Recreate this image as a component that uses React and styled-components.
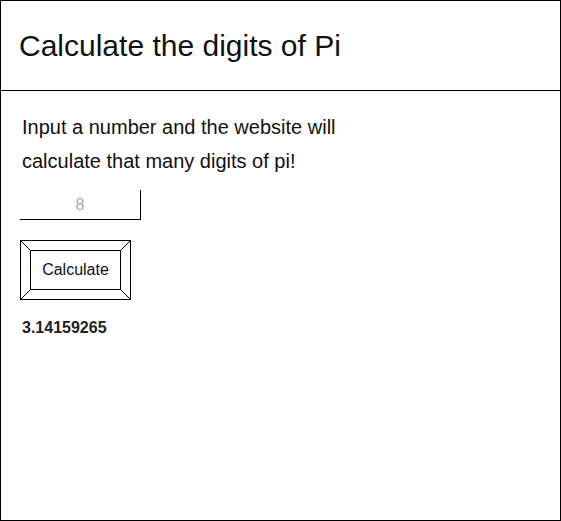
import React, { useState } from 'react'
import styled, { createGlobalStyle } from 'styled-components'

const GlobalStyle = createGlobalStyle`
  html, body {
    margin: 0;
    padding: 0;
    background: #fff;
  }
  body {
    font-family: "Liberation Sans", Arial, sans-serif;
    color: #111;
  }
`

const Page = styled.div`
  width: 561px;
  height: 521px;
  box-sizing: border-box;
  border: 1px solid #000;
  display: flex;
  flex-direction: column;
`

const Header = styled.header`
  height: 90px;
  box-sizing: border-box;
  border-bottom: 1px solid #000;
  display: flex;
  align-items: center;
  padding-left: 18px;
`

const Title = styled.h1`
  margin: 0;
  font-size: 30px;
  font-weight: normal;
  color: #111;
`

const Content = styled.main`
  padding: 19px 19px 0 19px;
  display: flex;
  flex-direction: column;
  align-items: flex-start;
`

const Intro = styled.p`
  margin: 0 0 0 2px;
  font-size: 20px;
  line-height: 34px;
  width: 330px;
`

const NumberInput = styled.input`
  margin-top: 12px;
  width: 121px;
  height: 30px;
  box-sizing: border-box;
  border: none;
  border-right: 1px solid #000;
  border-bottom: 1px solid #000;
  font-family: inherit;
  font-size: 16px;
  text-align: center;
  outline: none;
  padding: 0;

  &::placeholder {
    color: #aaa;
  }
`

const Button = styled.button`
  position: relative;
  margin-top: 20px;
  width: 111px;
  height: 60px;
  box-sizing: border-box;
  border: 1px solid #000;
  background: #fff;
  padding: 9px;
  font-family: inherit;
  cursor: pointer;
`

const ButtonFace = styled.span`
  display: flex;
  align-items: center;
  justify-content: center;
  height: 100%;
  box-sizing: border-box;
  border: 1px solid #000;
  font-size: 16px;
  color: #111;
`

const Bevel = styled.svg`
  position: absolute;
  inset: 0;
  width: 100%;
  height: 100%;
  pointer-events: none;
`

const Result = styled.div`
  margin-top: 19px;
  margin-left: 2px;
  font-size: 16px;
  font-weight: bold;
  color: #222;
`

const App = () => {
  const [digits, setDigits] = useState('')

  return (
    <Page>
      <GlobalStyle />
      <Header>
        <Title>Calculate the digits of Pi</Title>
      </Header>
      <Content>
        <Intro>Input a number and the website will calculate that many digits of pi!</Intro>
        <NumberInput
          type="text"
          placeholder="8"
          value={digits}
          onChange={e => setDigits(e.target.value)}
        />
        <Button type="button">
          <Bevel viewBox="0 0 109 58" preserveAspectRatio="none">
            <line x1="0" y1="0" x2="10" y2="10" stroke="#000" strokeWidth="1" />
            <line x1="109" y1="0" x2="99" y2="10" stroke="#000" strokeWidth="1" />
            <line x1="0" y1="58" x2="10" y2="48" stroke="#000" strokeWidth="1" />
            <line x1="109" y1="58" x2="99" y2="48" stroke="#000" strokeWidth="1" />
          </Bevel>
          <ButtonFace>Calculate</ButtonFace>
        </Button>
        <Result>3.14159265</Result>
      </Content>
    </Page>
  )
}

export default App
